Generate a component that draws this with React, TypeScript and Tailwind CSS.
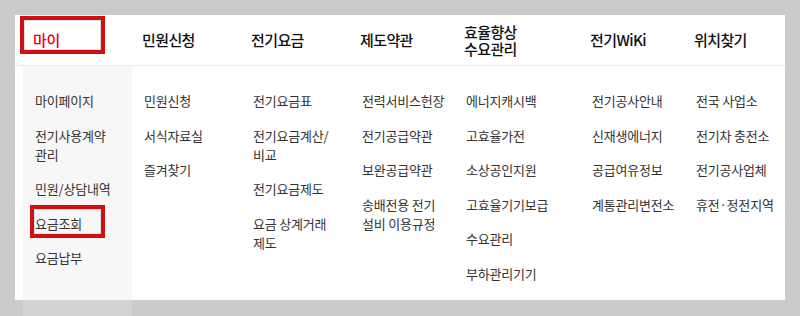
import { Fragment } from "react";

const font = { fontFamily: '"Noto Sans CJK KR", "Noto Sans", sans-serif' };

type Column = {
  title: string[];
  width: string;
  items: string[][];
  gray?: boolean;
  active?: boolean;
};

const columns: Column[] = [
  {
    title: ["마이"],
    width: "w-[109px]",
    gray: true,
    active: true,
    items: [["마이페이지"], ["전기사용계약", "관리"], ["민원/상담내역"], ["요금조회"], ["요금납부"]],
  },
  {
    title: ["민원신청"],
    width: "w-[109px]",
    items: [["민원신청"], ["서식자료실"], ["즐겨찾기"]],
  },
  {
    title: ["전기요금"],
    width: "w-[109px]",
    items: [["전기요금표"], ["전기요금계산/", "비교"], ["전기요금제도"], ["요금 상계거래", "제도"]],
  },
  {
    title: ["제도약관"],
    width: "w-[104px]",
    items: [["전력서비스헌장"], ["전기공급약관"], ["보완공급약관"], ["송배전용 전기", "설비 이용규정"]],
  },
  {
    title: ["효율향상", "수요관리"],
    width: "w-[126px]",
    items: [["에너지캐시백"], ["고효율가전"], ["소상공인지원"], ["고효율기기보급"], ["수요관리"], ["부하관리기기"]],
  },
  {
    title: ["전기WiKi"],
    width: "w-[104px]",
    items: [["전기공사안내"], ["신재생에너지"], ["공급여유정보"], ["계통관리변전소"]],
  },
  {
    title: ["위치찾기"],
    width: "flex-1",
    items: [["전국 사업소"], ["전기차 충전소"], ["전기공사업체"], ["휴전·정전지역"]],
  },
];

// wrapped labels: plain text nodes split by <br />
const withBreaks = (lines: string[]) =>
  lines.map((l, i) => (
    <Fragment key={l}>
      {i > 0 && <br />}
      {l}
    </Fragment>
  ));

export default function App() {
  return (
    <div className="relative w-[800px] h-[316px] bg-[#cbcbcb] pt-[15px] px-[15px] overflow-hidden" style={font}>
      <div className="w-[770px] h-[285px] bg-white flex flex-col">
        {/* top menu */}
        <div className="h-[51px] flex pl-[8px] border-b border-[#ececec] shrink-0">
          {columns.map((col) => (
            <div key={col.title.join("")} className={`${col.width} pl-[10px] flex items-center`}>
              {col.active ? (
                <span className="text-[15px] leading-[17px] font-medium text-[#e60012] tracking-[-0.3px] border-b-2 border-[#e60012] pb-[1px] mt-[2px]">
                  {col.title[0]}
                </span>
              ) : (
                <div className="text-[15px] leading-[17.5px] font-medium text-[#111] tracking-[-0.6px]">
                  {withBreaks(col.title)}
                </div>
              )}
            </div>
          ))}
        </div>

        {/* sub menu */}
        <div className="flex flex-1 pl-[8px]">
          {columns.map((col) => (
            <div
              key={col.title.join("")}
              className={`${col.width} ${col.gray ? "bg-[#f7f7f7]" : ""} pl-[12px] pt-[25px] flex flex-col gap-[15.5px]`}
            >
              {col.items.map((lines) => (
                <div key={lines.join("")} className="text-[13px] leading-[19px] text-[#333] tracking-[-0.2px]">
                  {withBreaks(lines)}
                </div>
              ))}
            </div>
          ))}
        </div>
      </div>
      <div className="ml-[8px] w-[109px] h-[16px] bg-[#d3d3d3]" />

      {/* highlight boxes */}
      <div className="absolute left-[20px] top-[16px] w-[85px] h-[38px] border-4 border-[#d01010]">
        <div className="w-full h-full border border-[#dedede]" />
      </div>
      <div className="absolute left-[30px] top-[205px] w-[75px] h-[33px] border-4 border-[#d01010]">
        <div className="w-full h-full border border-[#dedede]" />
      </div>
    </div>
  );
}
